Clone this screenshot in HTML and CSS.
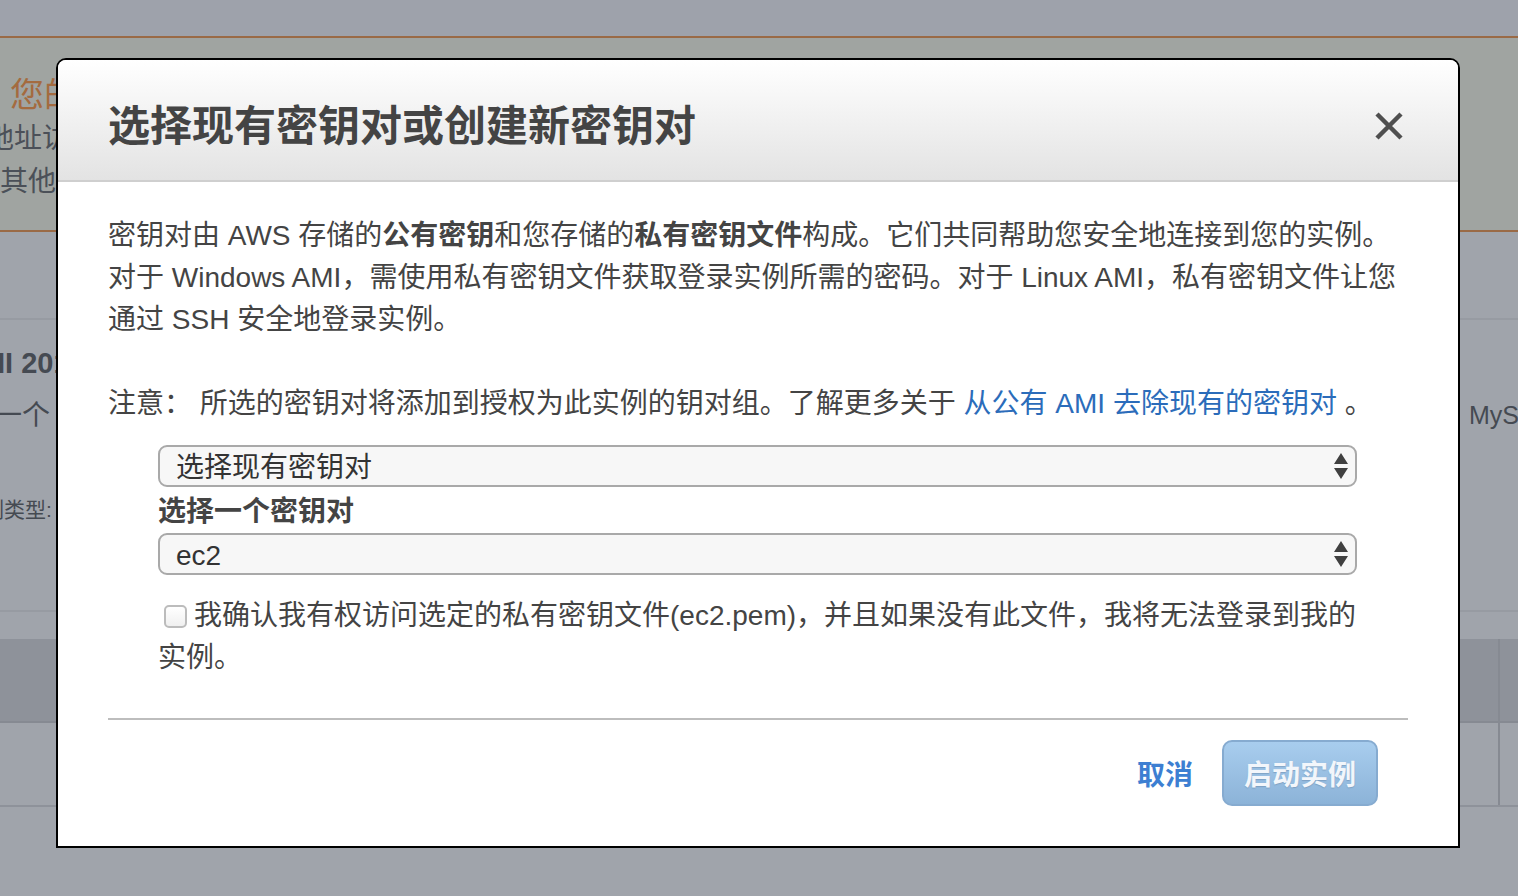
FILE: index.html
```html
<!DOCTYPE html>
<html lang="zh-CN">
<head>
<meta charset="utf-8">
<title>选择现有密钥对或创建新密钥对</title>
<link rel="stylesheet" href="styles.css">
</head>
<body>
<div class="page">
  <div class="bg-top"></div>
  <div class="bg-warn">
    <div class="warn-title">您的实例正在启动</div>
    <div class="warn-line shift1">地址访问您的实例</div>
    <div class="warn-line">其他选项</div>
  </div>
  <div class="bg-sec1"></div>
  <div class="bg-sec2">
    <div class="sec2-left">
      <div class="ami">AMI 2018</div>
      <div class="ami-sub">一个</div>
      <div class="ami-type">实例类型:</div>
    </div>
    <div class="sec2-right">MySQL</div>
  </div>
  <div class="bg-gap"></div>
  <div class="bg-thead"><div></div><div></div></div>
  <div class="bg-trow"><div></div><div></div></div>
</div>

<div class="modal">
  <div class="modal-header">
    <h1 class="modal-title">选择现有密钥对或创建新密钥对</h1>
    <svg class="close" width="28" height="28" viewBox="0 0 28 28"><path d="M2 2 L26 26 M26 2 L2 26" stroke="#4f4f4f" stroke-width="4.5" fill="none"/></svg>
  </div>
  <div class="modal-body">
    <p class="para">密钥对由 AWS 存储的<b>公有密钥</b>和您存储的<b>私有密钥文件</b>构成。它们共同帮助您安全地连接到您的实例。对于 Windows AMI，需使用私有密钥文件获取登录实例所需的密码。对于 Linux AMI，私有密钥文件让您通过 SSH 安全地登录实例。</p>
    <p class="para note">注意： 所选的密钥对将添加到授权为此实例的钥对组。了解更多关于 <a class="link">从公有 AMI 去除现有的密钥对</a> 。</p>
    <div class="form">
      <div class="select first">
        <span>选择现有密钥对</span>
        <svg width="14" height="26" viewBox="0 0 14 26"><path d="M7 0 L14 11 L0 11 Z M0 15 L14 15 L7 26 Z" fill="#404040"/></svg>
      </div>
      <div class="label">选择一个密钥对</div>
      <div class="select">
        <span>ec2</span>
        <svg width="14" height="26" viewBox="0 0 14 26"><path d="M7 0 L14 11 L0 11 Z M0 15 L14 15 L7 26 Z" fill="#404040"/></svg>
      </div>
      <div class="check"><span class="box"></span>我确认我有权访问选定的私有密钥文件(ec2.pem)，并且如果没有此文件，我将无法登录到我的实例。</div>
    </div>
    <div class="rule"></div>
    <div class="footer">
      <span class="cancel">取消</span>
      <span class="launch">启动实例</span>
    </div>
  </div>
</div>
</body>
</html>
```
FILE: styles.css
```css
* { box-sizing: border-box; }
html, body { margin: 0; padding: 0; }
body {
  width: 1518px;
  height: 896px;
  overflow: hidden;
  background: #a0a4ab;
  font-family: "Liberation Sans", "Noto Sans CJK SC", sans-serif;
  position: relative;
}
.page { width: 1518px; }
.bg-top {
  height: 38px;
  background: #9ea2ab;
  border-bottom: 2px solid #9a6a46;
}
.bg-warn {
  height: 194px;
  background: #a0a4a1;
  border-bottom: 2px solid #9a6a46;
  padding-top: 34px;
  color: #4b5058;
  overflow: hidden;
  white-space: nowrap;
}
.warn-title {
  color: #a46b3f;
  font-size: 34px;
  line-height: 46px;
  margin-left: 10px;
}
.warn-line {
  font-size: 28px;
  line-height: 42px;
}
.warn-line + .warn-line { margin-top: 1px; }
.shift1 { margin-left: -14px; }
.bg-sec1 {
  height: 88px;
  border-bottom: 2px solid #979ba2;
}
.bg-sec2 {
  height: 292px;
  border-bottom: 2px solid #979ba2;
  display: flex;
  justify-content: space-between;
  color: #454a52;
  overflow: hidden;
  white-space: nowrap;
}
.sec2-left { padding-top: 23px; }
.ami {
  font-weight: bold;
  font-size: 29px;
  line-height: 40px;
  margin-left: -40px;
}
.ami-sub {
  font-size: 28px;
  line-height: 42px;
  margin-top: 12px;
  margin-left: -6px;
}
.ami-type {
  font-size: 21px;
  line-height: 30px;
  margin-top: 58px;
  margin-left: -38px;
}
.sec2-right {
  width: 49px;
  overflow: hidden;
  font-size: 25px;
  line-height: 30px;
  padding-top: 80px;
}
.bg-gap { height: 27px; }
.bg-thead {
  height: 84px;
  background: #8e929a;
  border-bottom: 2px solid #868a92;
  display: grid;
  grid-template-columns: 1500px 18px;
}
.bg-trow {
  height: 84px;
  border-bottom: 2px solid #8e929a;
  display: grid;
  grid-template-columns: 1500px 18px;
}
.bg-thead > div:first-child,
.bg-trow > div:first-child { border-right: 2px solid #868a92; }

/* modal */
.modal {
  position: absolute;
  left: 56px;
  top: 58px;
  width: 1404px;
  height: 790px;
  border: 2px solid #000;
  border-radius: 10px 10px 0 0;
  background: #fff;
  overflow: hidden;
  color: #444;
}
.modal-header {
  height: 122px;
  background: linear-gradient(#ffffff, #e3e3e3);
  border-bottom: 2px solid #cfcfcf;
  display: flex;
  align-items: center;
  justify-content: space-between;
  padding: 14px 55px 0 50px;
}
.modal-title {
  margin: 0;
  font-size: 42px;
  font-weight: bold;
  line-height: 60px;
  color: #444;
}
.close { display: block; margin-top: -2px; }
.modal-body {
  padding: 33px 50px 0 50px;
}
.para {
  margin: 0;
  font-size: 28px;
  line-height: 42px;
}
.para b { font-weight: bold; }
.note { margin-top: 42px; }
.link { color: #2b6cba; text-decoration: none; }
.form {
  margin: 0 51px 0 50px;
}
.select {
  height: 42px;
  border: 2px solid #a9a9a9;
  border-radius: 9px;
  background: #f7f7f7;
  display: flex;
  align-items: center;
  justify-content: space-between;
  padding: 0 7px 0 16px;
  font-size: 28px;
  color: #333;
}
.select.first { margin-top: 20px; }
.select span { line-height: 38px; padding-top: 4px; }
.label {
  margin-top: 4px;
  font-size: 28px;
  font-weight: bold;
  line-height: 42px;
}
.check {
  margin-top: 20px;
  font-size: 28px;
  line-height: 42px;
}
.box {
  display: inline-block;
  width: 23px;
  height: 23px;
  border: 2px solid #bcbcbc;
  border-radius: 5px;
  background: linear-gradient(#ffffff, #f0f0f0);
  margin: 0 7px 0 6px;
  vertical-align: -3px;
}
.rule {
  margin-top: 39px;
  border-top: 2px solid #bdbdbd;
}
.footer {
  display: flex;
  justify-content: flex-end;
  align-items: center;
  gap: 29px;
  padding: 20px 30px 0 0;
}
.cancel {
  color: #3d7fd2;
  font-weight: bold;
  font-size: 28px;
}
.launch {
  width: 156px;
  height: 66px;
  border: 2px solid #86abd0;
  border-radius: 10px;
  background: linear-gradient(#a8cdee, #8cb3d8);
  color: #f2f6fb;
  font-weight: bold;
  font-size: 28px;
  display: flex;
  align-items: center;
  justify-content: center;
  text-shadow: 0 1px 1px rgba(80,110,140,0.35);
}
```
